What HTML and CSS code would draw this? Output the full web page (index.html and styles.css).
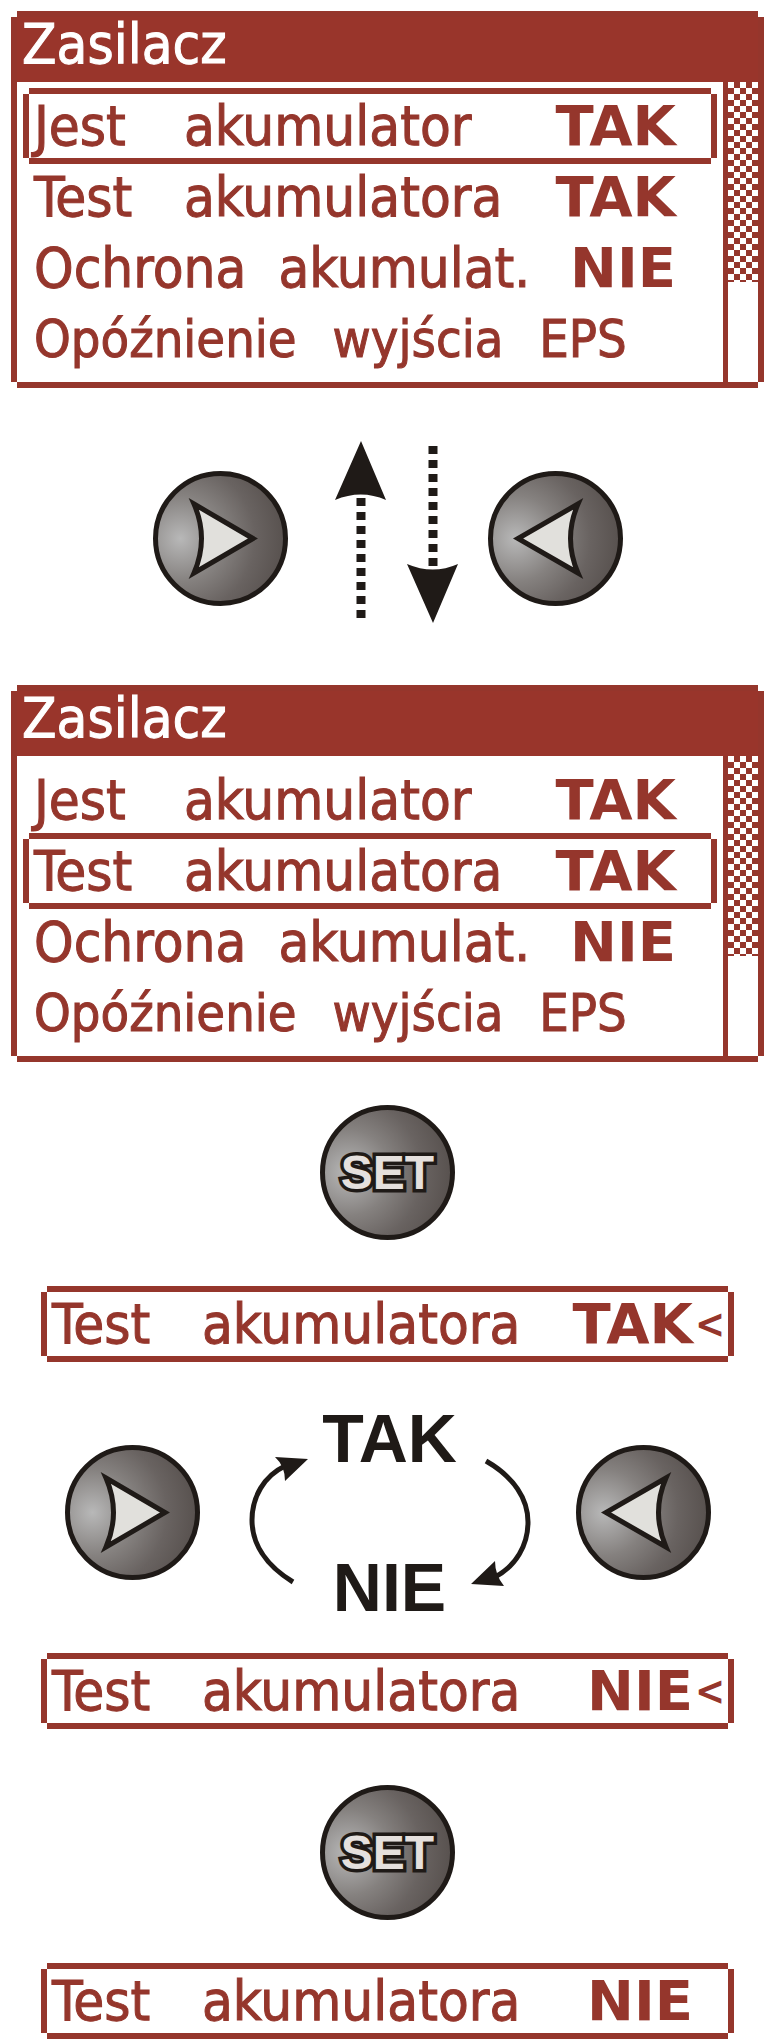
FILE: index.html
```html
<!DOCTYPE html>
<html lang="pl">
<head>
    <meta charset="UTF-8">
    <meta name="viewport" content="width=device-width, initial-scale=1.0">
    <title>Zasilacz</title>
    <link rel="stylesheet" href="styles.css">
</head>
<body>
    <main class="page">
        <section class="screen">
            <h2 class="screen-title">Zasilacz</h2>
            <div class="screen-body">
                <ul class="menu">
                    <li class="row selected"><span class="word">Jest</span><span class="word">akumulator</span><b class="value">TAK</b><span class="marker"></span></li>
                    <li class="row"><span class="word">Test</span><span class="word">akumulatora</span><b class="value">TAK</b><span class="marker"></span></li>
                    <li class="row"><span class="word">Ochrona</span><span class="word">akumulat.</span><b class="value">NIE</b><span class="marker"></span></li>
                    <li class="row long"><span class="word">Opóźnienie</span><span class="word">wyjścia</span><span class="word">EPS</span></li>
                </ul>
                <div class="scrollbar"><div class="thumb"></div></div>
            </div>
        </section>

        <div class="keys scroll-keys">
            <button type="button" class="key" aria-label="W górę">
                <svg class="key-icon" viewBox="0 0 135 135"><path d="M41 33 L100 67.500 L41 102 Q56 67.500 41 33 Z"/></svg>
            </button>
            <svg class="scroll-arrows" viewBox="0 0 200 194">
                <path class="dash" d="M73 57 V178"/>
                <path class="head" d="M73 0 L98 59 Q73 48 47 59 Z"/>
                <path class="dash" d="M145 5 V126"/>
                <path class="head" d="M145 182 L170 123 Q145 134 119 123 Z"/>
            </svg>
            <button type="button" class="key" aria-label="W dół">
                <svg class="key-icon" viewBox="0 0 135 135"><path d="M90 33 L30 67.500 L90 102 Q75 67.500 90 33 Z"/></svg>
            </button>
        </div>

        <section class="screen">
            <h2 class="screen-title">Zasilacz</h2>
            <div class="screen-body">
                <ul class="menu">
                    <li class="row"><span class="word">Jest</span><span class="word">akumulator</span><b class="value">TAK</b><span class="marker"></span></li>
                    <li class="row selected"><span class="word">Test</span><span class="word">akumulatora</span><b class="value">TAK</b><span class="marker"></span></li>
                    <li class="row"><span class="word">Ochrona</span><span class="word">akumulat.</span><b class="value">NIE</b><span class="marker"></span></li>
                    <li class="row long"><span class="word">Opóźnienie</span><span class="word">wyjścia</span><span class="word">EPS</span></li>
                </ul>
                <div class="scrollbar"><div class="thumb"></div></div>
            </div>
        </section>

        <div class="keys set-first">
            <button type="button" class="key set">SET</button>
        </div>

        <div class="row selected line"><span class="word">Test</span><span class="word">akumulatora</span><b class="value">TAK</b><b class="marker">&lt;</b></div>

        <div class="keys cycle">
            <button type="button" class="key" aria-label="Poprzednia wartość">
                <svg class="key-icon" viewBox="0 0 135 135"><path d="M41 33 L100 67.500 L41 102 Q56 67.500 41 33 Z"/></svg>
            </button>
            <svg class="cycle-arrow" viewBox="0 0 72 156">
                <path class="arc" d="M53 147 C25 130 12 108 12 85 C12 62 24 41 45 31"/>
                <path class="head" d="M68 24 L35 22 Q45 31 45 46 Z"/>
            </svg>
            <div class="cycle-labels">
                <span>TAK</span>
                <span>NIE</span>
            </div>
            <svg class="cycle-arrow" viewBox="0 0 72 156">
                <path class="arc" d="M18 26 C46 42 60 64 60 87 C60 110 48 131 27 142"/>
                <path class="head" d="M3 149 L36 151 Q27 140 27 126 Z"/>
            </svg>
            <button type="button" class="key" aria-label="Następna wartość">
                <svg class="key-icon" viewBox="0 0 135 135"><path d="M90 33 L30 67.500 L90 102 Q75 67.500 90 33 Z"/></svg>
            </button>
        </div>

        <div class="row selected line"><span class="word">Test</span><span class="word">akumulatora</span><b class="value">NIE</b><b class="marker">&lt;</b></div>

        <div class="keys set-second">
            <button type="button" class="key set">SET</button>
        </div>

        <div class="row selected line"><span class="word">Test</span><span class="word">akumulatora</span><b class="value">NIE</b><span class="marker"></span></div>
    </main>
</body>
</html>
```
FILE: styles.css
```css
* {
    box-sizing: border-box;
}
body {
    margin: 0;
    background: white;
    color: #95362c;
    font-family: "DejaVu Sans Condensed", "DejaVu Sans", sans-serif;
}
.page {
    padding: 11px 12px 0 11px;
}

/* LCD screen, the corner pixels are cut out */
.screen, .row.selected {
    border: 6px solid #95362c;
    clip-path: polygon(6px 0, calc(100% - 6px) 0, calc(100% - 6px) 6px, 100% 6px, 100% calc(100% - 6px), calc(100% - 6px) calc(100% - 6px), calc(100% - 6px) 100%, 6px 100%, 6px calc(100% - 6px), 0 calc(100% - 6px), 0 6px, 6px 6px);
}
.screen-title {
    margin: 0;
    padding: 0 5px 12px;
    height: 65px;
    background: #99352b;
    color: white;
    font-size: 56px;
    font-weight: normal;
    line-height: 53px;
    -webkit-text-stroke: 1px white;
}
.screen-body {
    display: flex;
    height: 300px;
}
.menu {
    flex: 1;
    margin: 0;
    padding: 6px;
    list-style: none;
}
.row {
    display: flex;
    align-items: center;
    gap: 32px;
    height: 76px;
    margin-bottom: -5px;
    padding-left: 5px;
    border: 6px solid transparent;
    font-size: 56px;
    line-height: 64px;
    white-space: nowrap;
}
.word {
    min-width: 118px;
    -webkit-text-stroke: 1px #95362c;
}
.row.long {
    gap: 36px;
    font-size: 52px;
}
.value {
    margin-left: auto;
    font-family: "DejaVu Sans", sans-serif;
}
.marker {
    width: 35px;
    margin-left: -32px;
    padding-left: 2px;
    font-size: 40px;
}
.row.line {
    margin: 0 30px;
}
.scrollbar {
    width: 35px;
    border-left: 5px solid #95362c;
}
.thumb {
    height: 200px;
    background: repeating-conic-gradient(#95362c 0 25%, white 0 50%) 0 0 / 12px 12px;
}

/* round keys */
.keys {
    display: flex;
    justify-content: center;
    align-items: center;
}
.scroll-keys {
    padding: 53px 0 50px;
}
.set-first {
    padding: 43px 0 46px;
}
.set-second {
    padding: 56px 0 43px;
}
.key {
    flex: none;
    width: 135px;
    height: 135px;
    padding: 0;
    border: 5px solid #1f1a17;
    border-radius: 50%;
    background: radial-gradient(circle at 18% 50%, #b8b8b8 0, #85817f 36%, #696361 62%, #4f4845 100%);
    cursor: pointer;
}
.key-icon {
    display: block;
    width: 135px;
    height: 135px;
    margin: -5px;
    fill: #e1e0dc;
    stroke: #1f1a17;
    stroke-width: 5;
    stroke-miterlimit: 10;
}
.set {
    color: #e5e0dd;
    font-family: "Liberation Sans", Arial, sans-serif;
    font-size: 48px;
    font-weight: bold;
    -webkit-text-stroke: 7px #1f1a17;
    paint-order: stroke fill;
}
.scroll-arrows {
    width: 200px;
    height: 194px;
}
.head {
    fill: #1f1a17;
}
.dash {
    stroke: #1f1a17;
    stroke-width: 9;
    stroke-dasharray: 8 6;
}
.cycle {
    padding: 42px 0 32px;
}
.cycle-arrow {
    width: 72px;
    height: 156px;
    margin: 0 0 0 40px;
}
.cycle-labels + .cycle-arrow {
    margin: 0 36px 0 0;
}
.arc {
    fill: none;
    stroke: #1f1a17;
    stroke-width: 5;
}
.cycle-labels {
    display: flex;
    flex-direction: column;
    align-items: center;
    gap: 81px;
    width: 156px;
    color: #1f1a17;
    font: bold 68px/68px "Liberation Sans", Arial, sans-serif;
}
```
